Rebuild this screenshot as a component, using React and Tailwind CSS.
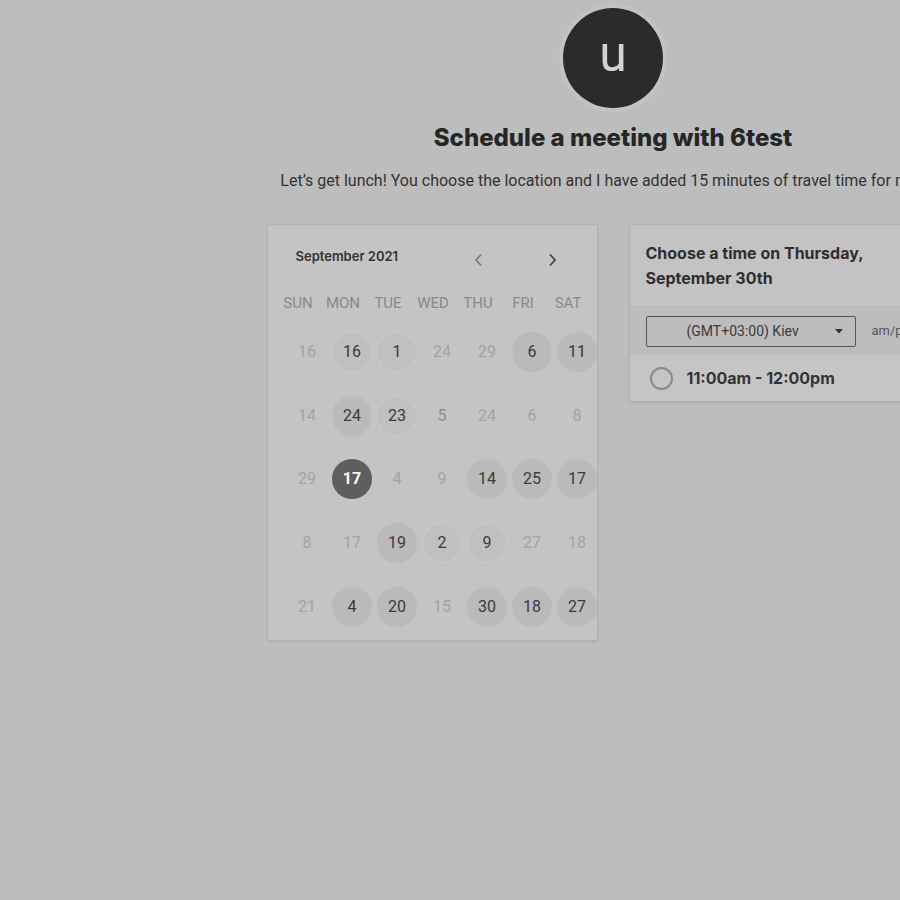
import React from "react";

const weekDays = ["SUN", "MON", "TUE", "WED", "THU", "FRI", "SAT"];

// m = muted, a = available, p = partly (dotted), s = selected
const weeks = [
  [["16", "m"], ["16", "p"], ["1", "p"], ["24", "m"], ["29", "m"], ["6", "a"], ["11", "a"]],
  [["14", "m"], ["24", "a"], ["23", "p"], ["5", "m2"], ["24", "m"], ["6", "m"], ["8", "m"]],
  [["29", "m"], ["17", "s"], ["4", "m"], ["9", "m"], ["14", "a"], ["25", "a"], ["17", "a"]],
  [["8", "m"], ["17", "m"], ["19", "a"], ["2", "p"], ["9", "p"], ["27", "m"], ["18", "m"]],
  [["21", "m"], ["4", "a"], ["20", "a"], ["15", "m"], ["30", "a"], ["18", "a"], ["27", "a"]],
];

function DayCell({ label, kind }) {
  let circle = "text-[#a3a3a3]";
  if (kind === "m2") circle = "text-[#8c8c8c]";
  if (kind === "a") circle = "bg-[#bababa] text-[#3a3a3a]";
  if (kind === "p") circle = "bg-[#c0c0c0] border border-dotted border-[#d6d6d6] text-[#3a3a3a]";
  if (kind === "s") circle = "bg-[#5e5e5e] text-white font-bold";
  return (
    <div className="w-[45px] h-[63.75px] shrink-0 flex items-center justify-center">
      <div className={`w-10 h-10 rounded-full flex items-center justify-center text-[16px] ${circle}`}>
        {label}
      </div>
    </div>
  );
}

function Calendar() {
  return (
    <div className="w-[331px] h-[417px] shrink-0 bg-[#c4c4c4] border border-[#b2b2b2] rounded-[2px] shadow-[0_1px_2px_rgba(0,0,0,0.08)]">
      {/* month header */}
      <div className="flex items-center pt-5 pl-[28px] pr-[40px]">
        <div className="text-[13px] leading-5 font-semibold text-[#333] font-['Inter',sans-serif]">
          September 2021
        </div>
        <div className="ml-auto flex items-center gap-[65px] mt-2">
          <svg width="9" height="14" viewBox="0 0 9 14" fill="none">
            <path d="M7 1.5 L2 7 L7 12.5" stroke="#7d7d7d" strokeWidth="1.8" />
          </svg>
          <svg width="9" height="14" viewBox="0 0 9 14" fill="none">
            <path d="M2 1.5 L7 7 L2 12.5" stroke="#444" strokeWidth="1.8" />
          </svg>
        </div>
      </div>

      {/* weekday names */}
      <div className="flex pl-2 mt-[26px]">
        {weekDays.map((d) => (
          <div key={d} className="w-[45px] shrink-0 text-center text-[15px] leading-5 text-[#8a8a8a]">
            {d}
          </div>
        ))}
      </div>

      {/* days */}
      <div className="pl-[17px] mt-[7px]">
        {weeks.map((week, i) => (
          <div key={i} className="flex">
            {week.map(([label, kind], j) => (
              <DayCell key={j} label={label} kind={kind} />
            ))}
          </div>
        ))}
      </div>
    </div>
  );
}

function TimePanel() {
  return (
    <div className="w-[331px] shrink-0 bg-[#c3c3c3] border border-[#b2b2b2] rounded-[2px] shadow-[0_1px_2px_rgba(0,0,0,0.08)] self-start">
      <div className="px-4 pt-4 pb-[15px] border-b border-[#b4b4b4] text-[16px] leading-[25px] font-bold text-[#2e2e2e] font-['Inter',sans-serif]">
        Choose a time on Thursday,
        <br />
        September 30th
      </div>
      <div className="h-[48px] flex items-center px-4 bg-[#bdbdbd]">
        <div className="w-[210px] h-[31px] shrink-0 border border-[#555] rounded-[2px] flex items-center pl-10 pr-3 text-[14px] text-[#3a3a3a]">
          <span>(GMT+03:00) Kiev</span>
          <svg className="ml-auto" width="8" height="5" viewBox="0 0 8 5">
            <path d="M0 0 H8 L4 4.5 Z" fill="#333" />
          </svg>
        </div>
        <span className="ml-4 text-[13px] text-[#555]">am/pm</span>
      </div>
      <div className="h-[46px] flex items-center px-5 bg-[#c5c5c5]">
        <div className="w-[23px] h-[23px] rounded-full border-2 border-[#8a8a8a]" />
        <span className="ml-[14px] text-[16px] font-bold text-[#333] font-['Inter',sans-serif]">
          11:00am - 12:00pm
        </span>
      </div>
    </div>
  );
}

export default function App() {
  return (
    <div className="w-full h-[900px] bg-[#bdbdbd] overflow-hidden font-['Roboto',sans-serif]">
      <div className="w-[1226px] flex flex-col items-center pt-2">
        <div className="w-[100px] h-[100px] rounded-full bg-[#2b2b2b] flex items-center justify-center ring-4 ring-[#c6c6c6]/60">
          <span className="text-[50px] leading-none text-[#d2d2d2] -mt-2">u</span>
        </div>
        <h1 className="mt-[15px] text-[24px] leading-[30px] font-extrabold text-[#262626] font-['Inter',sans-serif]">
          Schedule a meeting with 6test
        </h1>
        <p className="mt-4 pr-6 text-[16px] leading-6 text-[#333]">
          Let’s get lunch! You choose the location and I have added 15 minutes of travel time for me.
        </p>
        <div className="mt-[31px] flex gap-[31px]">
          <Calendar />
          <TimePanel />
        </div>
      </div>
    </div>
  );
}
